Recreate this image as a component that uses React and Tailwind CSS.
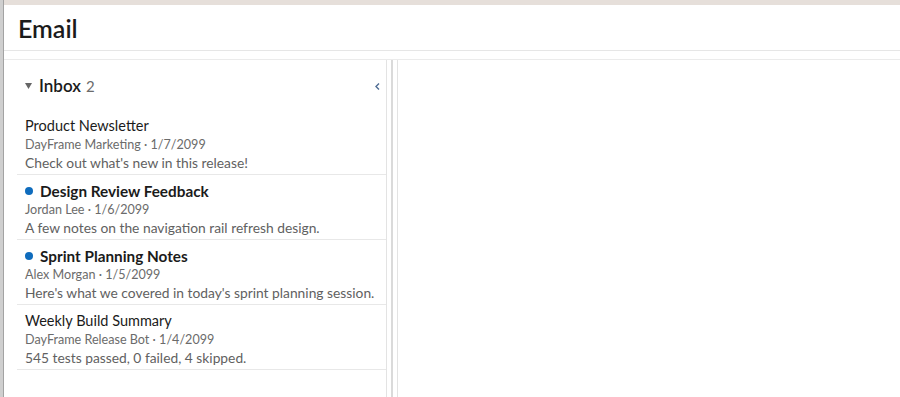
import React from 'react'

const emails = [
  { id: 1, subject: 'Product Newsletter', from: 'DayFrame Marketing', date: '1/7/2099', preview: "Check out what's new in this release!", unread: false },
  { id: 2, subject: 'Design Review Feedback', from: 'Jordan Lee', date: '1/6/2099', preview: 'A few notes on the navigation rail refresh design.', unread: true },
  { id: 3, subject: 'Sprint Planning Notes', from: 'Alex Morgan', date: '1/5/2099', preview: "Here's what we covered in today's sprint planning session.", unread: true },
  { id: 4, subject: 'Weekly Build Summary', from: 'DayFrame Release Bot', date: '1/4/2099', preview: '545 tests passed, 0 failed, 4 skipped.', unread: false },
]

const EmailRow = ({ email }) => (
  <div className="border-b border-[#e8e8e8] pl-[8px] pr-2 pt-[6px] pb-[2px]">
    <div className="flex items-center h-[20px]">
      {email.unread && <span className="w-[8px] h-[8px] rounded-full bg-[#0f6cbd] mr-[7px]" />}
      <span className={`${email.unread ? 'font-bold text-[15.3px]' : 'text-[14.5px]'} text-[#1b1b1b]`}>{email.subject}</span>
    </div>
    <div className="text-[12.6px] leading-[18px] text-[#6b6b6b] whitespace-nowrap">
      {email.from} · {email.date}
    </div>
    <div className="text-[13.8px] leading-[18px] text-[#616161] whitespace-nowrap">{email.preview}</div>
  </div>
)

export default function App() {
  return (
    <div className="flex h-screen bg-white overflow-hidden" style={{ fontFamily: 'Lato, "Open Sans", sans-serif' }}>
      {/* window edge */}
      <div className="w-[4px] bg-[#cfcfcf] border-r border-[#a3a3a3]" />

      <div className="flex-1 flex flex-col min-w-0">
        <div className="h-[5px] bg-[#e6dfda]" />

        <header className="h-[46px] border-b border-[#e6e6e6] flex items-center pl-[14px] pt-[3px]">
          <h1 className="text-[25px] font-semibold text-[#1b1b1b]">Email</h1>
        </header>

        <div className="h-[8px]" />

        <div className="flex flex-1 border-t border-[#ebebeb] min-h-0">
          {/* list pane */}
          <div className="w-[383px] border-r border-[#e3e3e3] flex flex-col">
            <div className="h-[50px] flex items-center pl-[21px] pr-[6px] pt-[2px]">
              <svg width="7" height="6" viewBox="0 0 7 6" className="mr-[7px]">
                <polygon points="0,0 7,0 3.5,6" fill="#666" />
              </svg>
              <span className="text-[17px] font-semibold text-[#1b1b1b]">Inbox</span>
              <span className="ml-[5px] text-[15px] text-[#6b6b6b]">2</span>
              <svg width="5" height="7" viewBox="0 0 5 7" className="ml-auto">
                <polyline points="4,0.5 1,3.5 4,6.5" fill="none" stroke="#4f6d94" strokeWidth="1.4" />
              </svg>
            </div>
            <div className="ml-[13px]">
              {emails.map((email) => (
                <EmailRow key={email.id} email={email} />
              ))}
            </div>
          </div>

          {/* splitter */}
          <div className="w-[10px] flex justify-center">
            <div className="w-[2px] bg-[#dadada]" />
          </div>

          {/* reading pane */}
          <div className="flex-1 border-l border-[#e3e3e3]" />
        </div>
      </div>
    </div>
  )
}
